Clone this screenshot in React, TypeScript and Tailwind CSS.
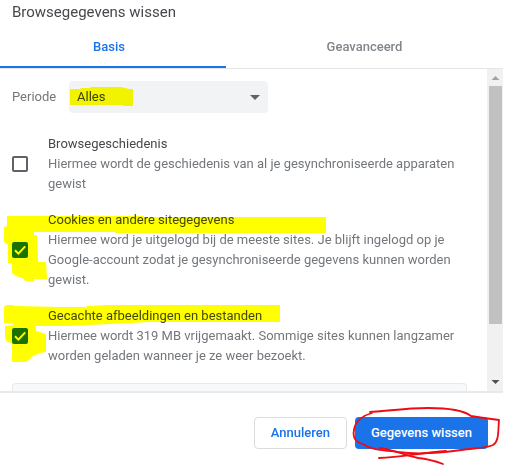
import { useState } from 'react';
import type { ReactNode } from 'react';

interface DataOptionProps {
  id: string;
  title: string;
  description: string;
  defaultChecked?: boolean;
  children?: ReactNode;
}

function DataOption({ id, title, description, defaultChecked = false, children }: DataOptionProps) {
  const [checked, setChecked] = useState(defaultChecked);

  return (
    <div className="relative flex items-center gap-5">
      <span className="grid shrink-0">
        <input
          id={id}
          type="checkbox"
          checked={checked}
          onChange={(e) => setChecked(e.target.checked)}
          className="col-start-1 row-start-1 size-4 appearance-none rounded-xs border-2 border-[#5f6368] checked:border-[#1a73e8] checked:bg-[#1a73e8]"
        />
        {checked && (
          <svg
            viewBox="0 0 16 16"
            className="pointer-events-none col-start-1 row-start-1 size-4"
            fill="none"
            stroke="#fff"
            strokeWidth="2"
          >
            <path d="M3 8.2 L6.4 11.6 L13.2 4.4" />
          </svg>
        )}
      </span>
      <label htmlFor={id} className="text-[13px] leading-5">
        <span className="block text-[#45484c]">{title}</span>
        <span className="block text-[#73777c]">{description}</span>
      </label>
      {children}
    </div>
  );
}

function Scrollbar() {
  return (
    <div className="flex w-4 shrink-0 flex-col items-center bg-[#f1f1f1]">
      <svg viewBox="0 0 16 17" className="h-[17px] w-4" fill="#a3a3a3">
        <path d="M4.5 11 L8.5 7 L12.5 11 Z" />
      </svg>
      <div className="w-[13px] grow-19 bg-[#c1c1c1]" />
      <div className="grow-4" />
      <svg viewBox="0 0 16 17" className="h-[17px] w-4" fill="#505050">
        <path d="M4.5 6 L8.5 10 L12.5 6 Z" />
      </svg>
    </div>
  );
}

export default function App() {
  const [tab, setTab] = useState('basis');

  return (
    <main className="bg-white pr-[7px] font-[Roboto,sans-serif]">
      <h1 className="px-3 py-0.5 text-[15px] leading-5 text-[#45484c]">Browsegegevens wissen</h1>

      <div
        role="tablist"
        className="mt-1 grid grid-cols-[226fr_277fr] border-b border-[#e4e5e7] text-[13px] leading-[38px] font-medium"
      >
        <button
          role="tab"
          aria-selected={tab === 'basis'}
          onClick={() => setTab('basis')}
          className="border-b-2 border-transparent pr-2 text-[#80868b] aria-selected:border-[#1a73e8] aria-selected:text-[#1a73e8]"
        >
          Basis
        </button>
        <button
          role="tab"
          aria-selected={tab === 'geavanceerd'}
          onClick={() => setTab('geavanceerd')}
          className="border-b-2 border-transparent text-[#80868b] aria-selected:border-[#1a73e8] aria-selected:text-[#1a73e8]"
        >
          Geavanceerd
        </button>
      </div>

      <div className="flex border-b-2 border-[#e8e9eb]">
        <div className="min-w-0 flex-1 pt-3 pr-5 pl-3">
          <div className="flex items-center text-[13px] leading-5">
            <label htmlFor="periode" className="w-[57px] text-[#73777c]">
              Periode
            </label>
            <div className="relative grid w-[199px] items-center">
              <select
                id="periode"
                defaultValue="all"
                className="col-start-1 row-start-1 h-8 appearance-none rounded bg-[#f1f3f4] px-2 text-[#3c4043]"
              >
                <option value="hour">Afgelopen uur</option>
                <option value="day">Afgelopen 24 uur</option>
                <option value="all">Alles</option>
              </select>
              <svg
                viewBox="0 0 10 5"
                className="pointer-events-none col-start-1 row-start-1 mr-2 h-[5px] w-2.5 justify-self-end"
                fill="#5f6368"
              >
                <path d="M0 0 H10 L5 5 Z" />
              </svg>
              {/* Marker over the selected period */}
              <svg
                viewBox="0 0 66 32"
                className="pointer-events-none absolute top-0 left-0 h-8 w-[66px] mix-blend-multiply"
                fill="#ff0"
              >
                <path d="M1 8 H11 L12 7 H21 L22 6 H52 L60 8 H64 V25 H55 L53 24 H1 Z" />
              </svg>
            </div>
          </div>

          <div className="mt-[21px] flex flex-col gap-4">
            <DataOption
              id="history"
              title="Browsegeschiedenis"
              description="Hiermee wordt de geschiedenis van al je gesynchroniseerde apparaten gewist"
            />
            <DataOption
              id="cookies"
              title="Cookies en andere sitegegevens"
              description="Hiermee word je uitgelogd bij de meeste sites. Je blijft ingelogd op je Google-account zodat je gesynchroniseerde gegevens kunnen worden gewist."
              defaultChecked
            >
              <svg
                viewBox="0 0 330 80"
                className="pointer-events-none absolute top-0 -left-3 h-20 w-[330px] mix-blend-multiply"
                fill="#ff0"
              >
                <path d="M7 6 H144 V7 H326 V23 H115 V22 H34 V25 H37 V34 L38 44 V52 H46 L47 69 H34 V71 H25 L24 69 L16 66 L12 63 V53 H8 V35 L4 32 V17 L7 16 Z" />
              </svg>
            </DataOption>
            <DataOption
              id="cache"
              title="Gecachte afbeeldingen en bestanden"
              description="Hiermee wordt 319 MB vrijgemaakt. Sommige sites kunnen langzamer worden geladen wanneer je ze weer bezoekt."
              defaultChecked
            >
              <svg
                viewBox="0 0 330 60"
                className="pointer-events-none absolute top-0 -left-3 h-15 w-[330px] overflow-visible mix-blend-multiply"
                fill="#ff0"
              >
                <path d="M6 -1 L12 -1 L15 0 L60 1 L85 1 L88 0 L108 -1 H280 V16 H150 L110 18 L66 20 H36 V25 L40 26 L46 28 V46 L40 47 L33 50 L29 54 L26 56 H12 V37 L7 36 L5 32 V20 L13 19 V18 L4 17 V1 Z" />
              </svg>
            </DataOption>
          </div>

          <div className="mt-[17px] h-2 rounded-t border border-b-0 border-[#e8eaed] bg-[#f8f9fa]" />
        </div>
        <Scrollbar />
      </div>

      <div className="flex justify-end gap-2 pt-6 pr-[15px] pb-5 text-[13px] font-medium">
        <button className="h-8 rounded border border-[#dadce0] px-4 text-[#1a73e8]">Annuleren</button>
        <div className="relative">
          <button className="h-8 rounded bg-[#1a73e8] px-4 text-white">Gegevens wissen</button>
          {/* Red pen around the confirm button */}
          <svg
            viewBox="350 404 155 62"
            className="pointer-events-none absolute -top-[13px] -left-[5px] h-[62px] w-[155px]"
            fill="none"
            stroke="#f00b12"
            strokeWidth="1.8"
            strokeLinecap="round"
            strokeLinejoin="round"
          >
            <path d="M372 413 C362 416 355 421 354 430 C352 440 359 443 363 444 C372 451 386 450 398 452 C420 455 440 453 461 450 C475 448 487 448 493 445 C499 441 498 433 499 420 L484 418 L471 416 C462 409 445 408 428 408 C408 408 386 411 370 412" />
            <path d="M379 458 C400 457 422 453 446 451" />
            <path d="M380 448 C394 450 408 456 418 458 C428 459 435 461 443 464" />
          </svg>
        </div>
      </div>
    </main>
  );
}
